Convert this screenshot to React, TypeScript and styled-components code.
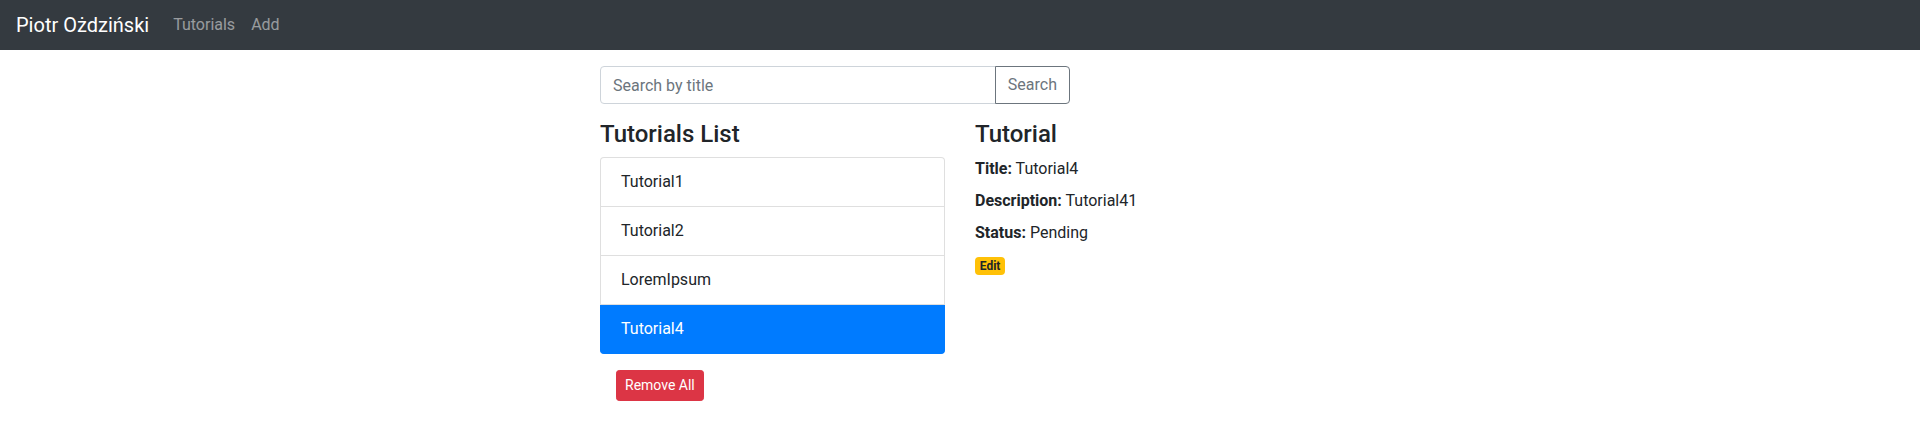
import React from "react";
import styled, { createGlobalStyle } from "styled-components";

const GlobalStyle = createGlobalStyle`
  *, *::before, *::after { box-sizing: border-box; }
  body {
    margin: 0;
    font-family: Roboto, "Liberation Sans", sans-serif;
    font-size: 16px;
    line-height: 1.5;
    color: #212529;
    background: #fff;
  }
`;

const Navbar = styled.nav`
  height: 50px;
  background: #343a40;
  display: flex;
  align-items: center;
  padding: 0 16px;
`;

const Brand = styled.a`
  font-size: 20px;
  line-height: 30px;
  color: #fff;
  text-decoration: none;
  margin-right: 16px;
  white-space: nowrap;
`;

const NavLinks = styled.div`
  display: flex;
`;

const NavLink = styled.a`
  color: rgba(255, 255, 255, 0.5);
  padding: 8px;
  text-decoration: none;
  font-size: 16px;
  line-height: 24px;
`;

const Container = styled.div`
  max-width: 1140px;
  margin: 16px auto 0;
  padding: 0 15px;
`;

const ListRow = styled.div`
  max-width: 750px;
  margin: 0 auto;
  display: flex;
  flex-wrap: wrap;
`;

const Col = styled.div<{ $span: number }>`
  flex: 0 0 ${(p) => (p.$span / 12) * 100}%;
  max-width: ${(p) => (p.$span / 12) * 100}%;
  padding: 0 15px;
`;

const InputGroup = styled.div`
  display: flex;
  margin-bottom: 16px;
`;

const SearchInput = styled.input`
  flex: 1 1 auto;
  min-width: 0;
  height: 38px;
  padding: 6px 12px;
  font: inherit;
  color: #495057;
  border: 1px solid #ced4da;
  border-radius: 4px 0 0 4px;
  outline: none;
  &::placeholder { color: #6c757d; opacity: 1; }
`;

const OutlineButton = styled.button`
  height: 38px;
  margin-left: -1px;
  padding: 6px 12px;
  font: inherit;
  color: #6c757d;
  background: transparent;
  border: 1px solid #6c757d;
  border-radius: 0 4px 4px 0;
`;

const Heading = styled.h4`
  font-size: 24px;
  font-weight: 500;
  line-height: 1.2;
  margin: 0 0 8px;
`;

const ListGroup = styled.ul`
  list-style: none;
  margin: 0;
  padding: 0;
  display: flex;
  flex-direction: column;
`;

const ListItem = styled.li<{ $active?: boolean }>`
  padding: 12px 20px;
  border: 1px solid ${(p) => (p.$active ? "#007bff" : "rgba(0,0,0,0.125)")};
  background: ${(p) => (p.$active ? "#007bff" : "#fff")};
  color: ${(p) => (p.$active ? "#fff" : "#212529")};
  & + & { border-top-width: 0; }
  &:first-child { border-radius: 4px 4px 0 0; }
  &:last-child { border-radius: 0 0 4px 4px; }
`;

const DangerButton = styled.button`
  margin: 16px;
  padding: 4px 8px;
  font: inherit;
  font-size: 14px;
  line-height: 1.5;
  color: #fff;
  background: #dc3545;
  border: 1px solid #dc3545;
  border-radius: 3.2px;
`;

const Field = styled.div``;

const Label = styled.label`
  display: inline-block;
  margin-bottom: 8px;
  font-weight: 700;
`;

const Badge = styled.a`
  display: inline-block;
  padding: 3px 4.8px;
  font-size: 12px;
  font-weight: 700;
  line-height: 1;
  color: #212529;
  background: #ffc107;
  border-radius: 4px;
  text-decoration: none;
`;

const tutorials = ["Tutorial1", "Tutorial2", "LoremIpsum", "Tutorial4"];

export default function App() {
  return (
    <>
      <GlobalStyle />
      <Navbar>
        <Brand href="#">Piotr Ożdziński</Brand>
        <NavLinks>
          <NavLink href="#">Tutorials</NavLink>
          <NavLink href="#">Add</NavLink>
        </NavLinks>
      </Navbar>
      <Container>
        <ListRow>
          <Col $span={8}>
            <InputGroup>
              <SearchInput placeholder="Search by title" />
              <OutlineButton>Search</OutlineButton>
            </InputGroup>
          </Col>
          <Col $span={6}>
            <Heading>Tutorials List</Heading>
            <ListGroup>
              {tutorials.map((t, i) => (
                <ListItem key={t} $active={i === 3}>
                  {t}
                </ListItem>
              ))}
            </ListGroup>
            <DangerButton>Remove All</DangerButton>
          </Col>
          <Col $span={6}>
            <Heading>Tutorial</Heading>
            <Field>
              <Label>Title:</Label> Tutorial4
            </Field>
            <Field>
              <Label>Description:</Label> Tutorial41
            </Field>
            <Field>
              <Label>Status:</Label> Pending
            </Field>
            <Badge href="#">Edit</Badge>
          </Col>
        </ListRow>
      </Container>
    </>
  );
}
